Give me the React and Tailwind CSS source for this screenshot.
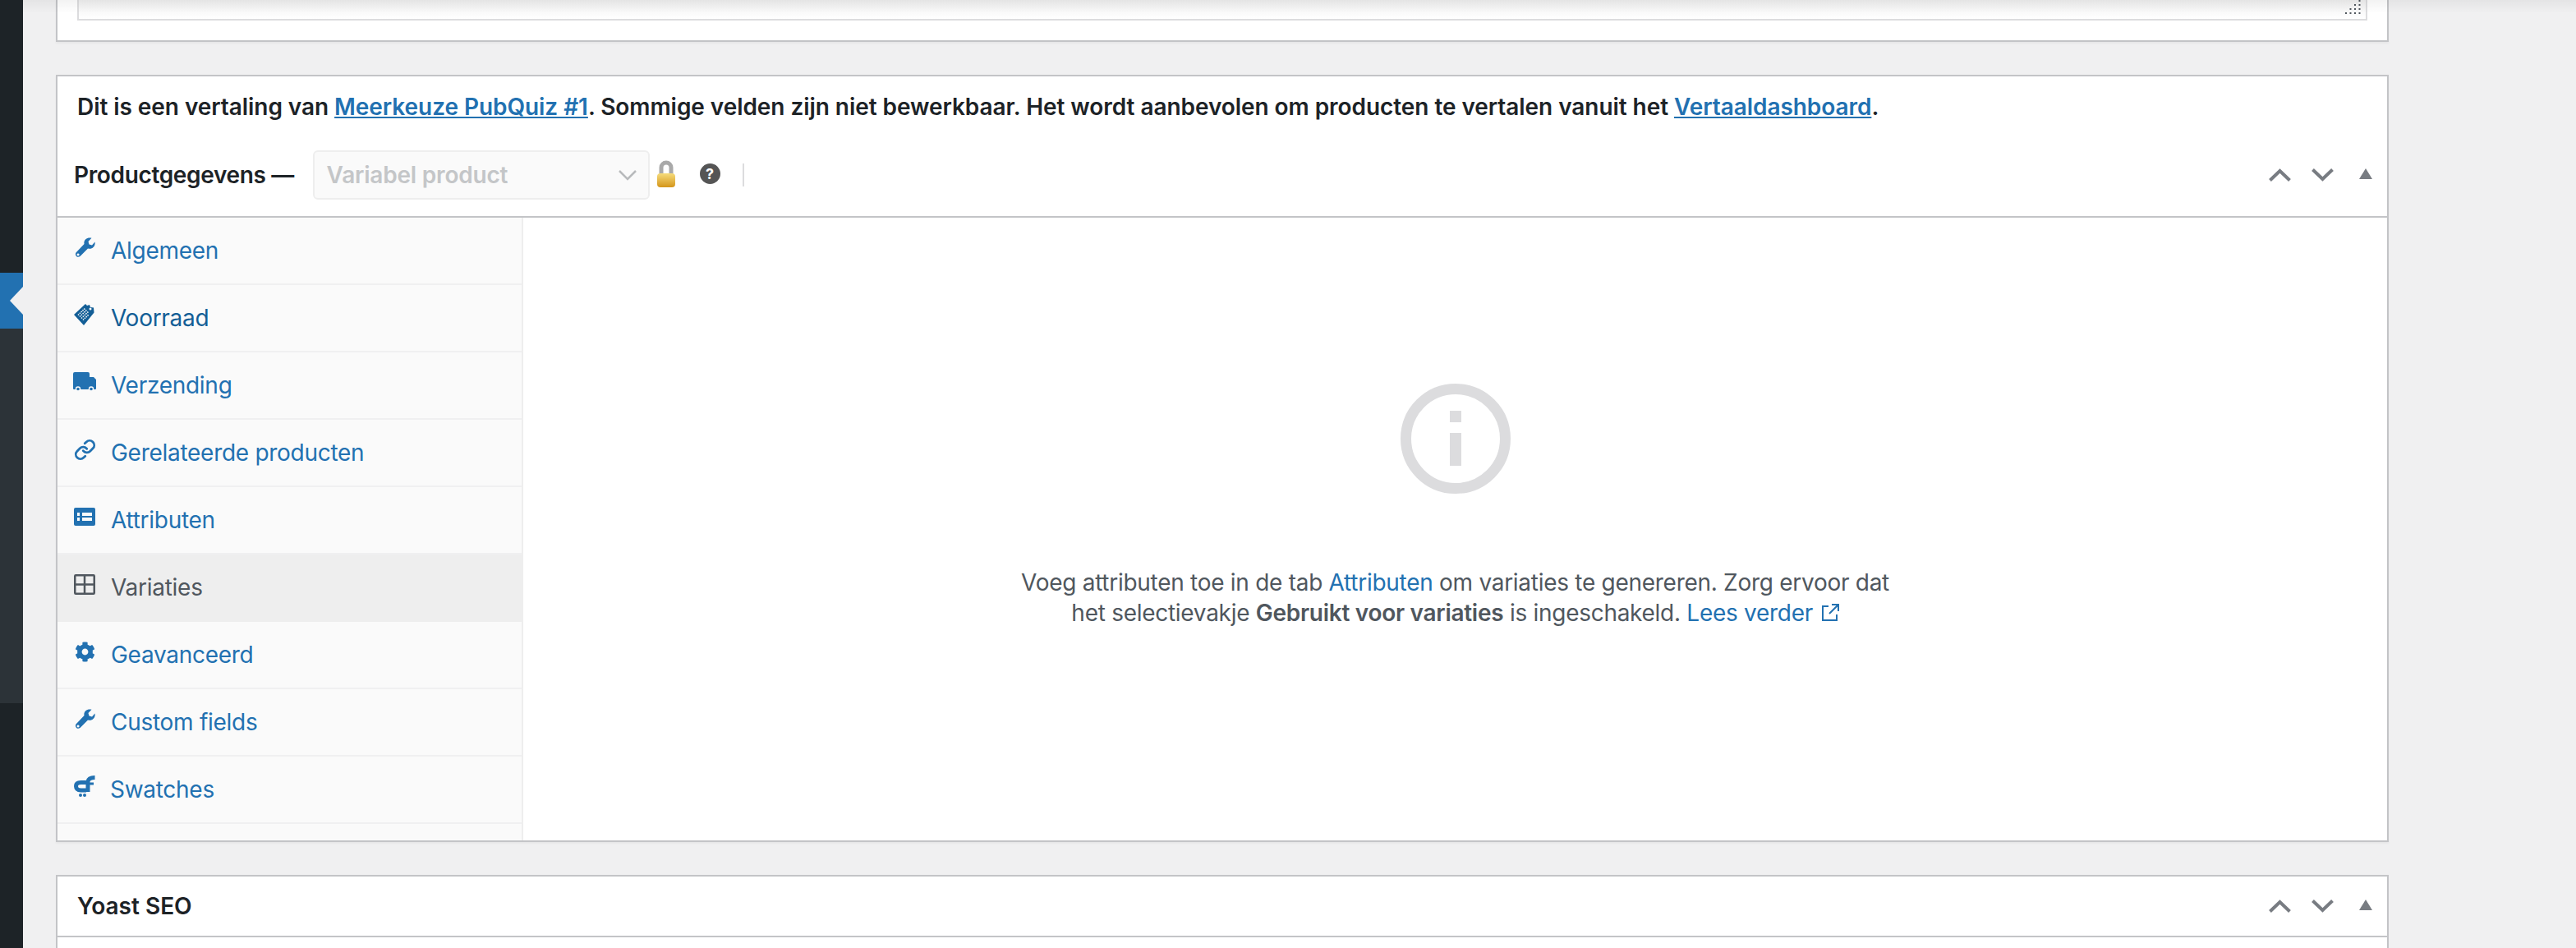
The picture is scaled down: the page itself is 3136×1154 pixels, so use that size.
import { FaCog } from 'react-icons/fa'
import { Link as LinkIcon } from 'lucide-react'

function Wrench() {
  return (
    <svg width="26" height="24" viewBox="0 0 26 24" fill="currentColor">
      <path fillRule="evenodd" d="M2.500 18.500 12.500 8C11.500 3 16 -.500 21.500 .800L17.500 5l1 3.500 3.500 1L25.500 5.500C26.500 11 22 15 17 13.500L7.500 23C4 25.500 .500 21.500 2.500 18.500ZM5 19.500a1.500 1.500 0 1 0 .1 0Z" />
    </svg>
  )
}

function Voorraad() {
  return (
    <svg width="28" height="28" viewBox="0 0 28 28" className="text-[#135e96]">
      <path d="M1 14 15 1l2 2 3-1 1 3 4 .5.5 6L13 27z" fill="currentColor" />
      <path d="M6 14.500 15 6M8 16.500 17 8M10 18.500l9-8.500M12 20.500l7-6.500" stroke="#fafafa" strokeWidth="1.500" strokeDasharray="1.500 1" fill="none" />
      <circle cx="21" cy="7" r="1.500" fill="#fafafa" />
    </svg>
  )
}

function Truck() {
  return (
    <svg width="28" height="24" viewBox="0 0 28 24">
      <path d="M0 2a2 2 0 0 1 2-2h16a2 2 0 0 1 2 2v4h5l3 3v11a1 1 0 0 1-1 1H1a1 1 0 0 1-1-1z" fill="currentColor" />
      <circle cx="6" cy="20.500" r="3.200" fill="#fafafa" />
      <circle cx="6" cy="20.500" r="1.800" fill="currentColor" />
      <circle cx="22" cy="20.500" r="3.200" fill="#fafafa" />
      <circle cx="22" cy="20.500" r="1.800" fill="currentColor" />
    </svg>
  )
}

function AttrIcon() {
  return (
    <svg width="26" height="22" viewBox="0 0 26 22">
      <rect width="26" height="22" rx="2" fill="currentColor" />
      <path d="M4 6h3v4H4zM10 6h12v4H10zM4 12h3v4H4zM10 12h12v4H10z" fill="#fafafa" />
    </svg>
  )
}

function GridIcon() {
  return (
    <svg width="26" height="25" viewBox="0 0 26 25" fill="none" stroke="currentColor" strokeWidth="2.500">
      <rect x="1.250" y="1.250" width="23.500" height="22.500" rx="1" />
      <path d="M13 1v23M1 12.500h24" />
    </svg>
  )
}

function SwatchIcon() {
  return (
    <svg width="26" height="26" viewBox="0 0 26 26" fill="none" stroke="currentColor" strokeWidth="5">
      <path d="M25.500 2.500c-5 0-8 1.500-8.500 5V20" />
      <path d="M15 8.500H8.500C4 8.500 2.500 10.500 2.500 13s1.500 5 6 5H15" />
      <path d="M15 10h9" strokeWidth="3" />
      <circle cx="8" cy="24" r="2" fill="currentColor" stroke="none" />
      <circle cx="13" cy="24" r="2" fill="currentColor" stroke="none" />
    </svg>
  )
}

const tabs = [
  { label: 'Algemeen', icon: <Wrench /> },
  { label: 'Voorraad', icon: <Voorraad />, text: 'text-[#135e96]' },
  { label: 'Verzending', icon: <Truck /> },
  { label: 'Gerelateerde producten', icon: <LinkIcon size={27} strokeWidth={2.500} /> },
  { label: 'Attributen', icon: <AttrIcon /> },
  { label: 'Variaties', icon: <GridIcon />, active: true },
  { label: 'Geavanceerd', icon: <FaCog size={25} /> },
  { label: 'Custom fields', icon: <Wrench /> },
  { label: 'Swatches', icon: <SwatchIcon />, gap: 'gap-[18px]' },
]

function Tab({ tab }) {
  return (
    <li className={`flex items-center pl-[20px] h-[82px] border-b-2 tracking-[-0.28px] ${tab.gap || 'gap-[19px]'} ${tab.active ? 'bg-[#eeeeee] border-[#eeeeee] text-[#50575e]' : `border-[#f0f0f1] ${tab.text || 'text-[#2271b1]'}`}`}>
      <span className="w-[26px] h-[28px] -mt-[8px] flex items-center justify-center text-[#2271b1] shrink-0">
        <span className={tab.active ? 'text-[#50575e]' : ''}>{tab.icon}</span>
      </span>
      <span>{tab.label}</span>
    </li>
  )
}

function BoxControls() {
  return (
    <div className="flex items-center gap-[25px] text-[#787c82]">
      <svg width="27" height="16" viewBox="0 0 27 16" fill="none" stroke="currentColor" strokeWidth="4"><path d="M1.500 14.500 13.500 3l12 11.500" /></svg>
      <svg width="27" height="16" viewBox="0 0 27 16" fill="none" stroke="currentColor" strokeWidth="4"><path d="M1.500 1.500 13.500 13l12-11.500" /></svg>
      <svg width="16" height="13" viewBox="0 0 16 13" fill="currentColor" className="ml-[6px] -mt-[3px]"><path d="M8 0l8 13H0z" /></svg>
    </div>
  )
}

function Lock() {
  return (
    <svg width="24" height="34" viewBox="0 0 24 34" className="ml-[8px] -mt-[2px]">
      <defs>
        <linearGradient id="gold" x1="0" y1="0" x2="0" y2="1">
          <stop offset="0" stopColor="#f6dc7c" />
          <stop offset="1" stopColor="#d4951a" />
        </linearGradient>
      </defs>
      <path d="M6 18V9a6 6 0 0 1 12 0v9" fill="none" stroke="#a9a9a9" strokeWidth="5" />
      <rect x="1" y="16" width="22" height="17" rx="4" fill="url(#gold)" />
    </svg>
  )
}

function Grip() {
  // resize handle of the textarea above
  const dots = []
  for (let row = 0; row < 4; row++) {
    for (let col = 3 - row; col < 4; col++) {
      dots.push(<rect key={`${row}-${col}`} x={1 + col * 5.500} y={1 + row * 5} width="2" height="2" />)
    }
  }
  return (
    <svg width="22" height="18" viewBox="0 0 22 18" fill="#50575e" className="self-end mr-[4px] mb-[6px]">{dots}</svg>
  )
}

export default function App() {
  return (
    <div className="relative flex h-[1154px] overflow-hidden bg-[#f0f0f1] font-['Inter',sans-serif] text-[28px] text-[#1d2327]">
      <aside className="w-[28px] shrink-0 bg-[#1d2327] flex flex-col">
        <div className="h-[332px]" />
        <div className="h-[68px] bg-[#2271b1] flex items-center justify-end">
          <div className="w-0 h-0 border-y-[17px] border-y-transparent border-r-[16px] border-r-[#f0f0f1]" />
        </div>
        <div className="h-[456px] bg-[#2c3338]" />
      </aside>

      <div className="absolute top-0 left-[28px] right-0 h-[16px] bg-linear-to-b from-black/5 to-transparent z-10" />

      <main className="pl-[40px] w-[2880px] shrink-0">
        <section className="bg-white border-x-2 border-b-2 border-[#c3c4c7] h-[51px] shadow-[0_2px_2px_rgba(0,0,0,0.04)]">
          <div className="mx-[24px] h-[25px] border-x-2 border-b-2 border-[#dcdcde] bg-linear-to-b from-[#f0f0f0] to-white flex justify-end">
            <Grip />
          </div>
        </section>

        <section className="mt-[40px] bg-white border-2 border-[#c3c4c7] shadow-[0_2px_2px_rgba(0,0,0,0.04)]">
          <p className="pl-[24px] h-[78px] flex items-end pb-[20px] font-semibold whitespace-pre tracking-[-0.06px]">
            Dit is een vertaling van <a className="text-[#2271b1] underline">Meerkeuze PubQuiz #1</a>. Sommige velden zijn niet bewerkbaar. Het wordt aanbevolen om producten te vertalen vanuit het <a className="text-[#2271b1] underline">Vertaaldashboard</a>.
          </p>
          <div className="flex items-center pl-[20px] pr-[18px] h-[94px] pb-[8px] border-b-2 border-[#c3c4c7]">
            <span className="font-semibold whitespace-pre tracking-[-0.35px]">Productgegevens — </span>
            <div className="ml-[16px] w-[410px] h-[60px] border-2 border-[#eeeeee] rounded-[6px] bg-[#fafafa] flex items-center justify-between pl-[15px] pr-[14px] font-semibold tracking-[-0.2px] text-[#c4c6c8]">
              <span>Variabel product</span>
              <svg width="22" height="14" viewBox="0 0 22 14" fill="none" stroke="#b8babc" strokeWidth="2.500"><path d="M1 2l10 10L21 2" /></svg>
            </div>
            <Lock />
            <span className="ml-[29px] w-[25px] h-[25px] rounded-full bg-[#555555] text-white text-[18px] font-bold flex items-center justify-center -mt-[4px]">?</span>
            <span className="ml-[27px] w-[2px] h-[28px] bg-[#dcdcde]" />
            <div className="ml-auto"><BoxControls /></div>
          </div>
          <div className="flex h-[758px]">
            <ul className="w-[567px] shrink-0 bg-[#fafafa] border-r-2 border-[#eeeeee]">
              {tabs.map(tab => <Tab key={tab.label} tab={tab} />)}
            </ul>
            <div className="flex-1 flex flex-col items-center pt-[202px] text-[#50575e] leading-[37px] tracking-[-0.28px]">
              <svg width="134" height="134" viewBox="0 0 134 134" className="text-[#dcdcde]">
                <circle cx="67" cy="67" r="60.500" fill="none" stroke="currentColor" strokeWidth="13" />
                <rect x="60" y="33" width="14" height="14" fill="currentColor" />
                <rect x="60" y="60" width="14" height="40" fill="currentColor" />
              </svg>
              <p className="mt-[90px] text-center whitespace-pre">
                Voeg attributen toe in de tab <a className="text-[#2271b1]">Attributen</a> om variaties te genereren. Zorg ervoor dat{'\n'}
                het selectievakje <b className="font-semibold">Gebruikt voor variaties</b> is ingeschakeld. <a className="text-[#2271b1]">Lees verder</a>{' '}
                <svg width="22" height="22" viewBox="0 0 22 22" fill="none" stroke="#2271b1" strokeWidth="2" className="inline -mt-[4px] ml-[2px]">
                  <path d="M9 3H2v17h17v-7M13 1h8v8M21 1 10 12" />
                </svg>
              </p>
            </div>
          </div>
        </section>

        <section className="mt-[40px] bg-white border-2 border-[#c3c4c7] h-[200px]">
          <div className="h-[74px] border-b-2 border-[#c3c4c7] flex items-center justify-between pl-[24px] pr-[18px] font-semibold">
            <span>Yoast SEO</span>
            <BoxControls />
          </div>
        </section>
      </main>
    </div>
  )
}
